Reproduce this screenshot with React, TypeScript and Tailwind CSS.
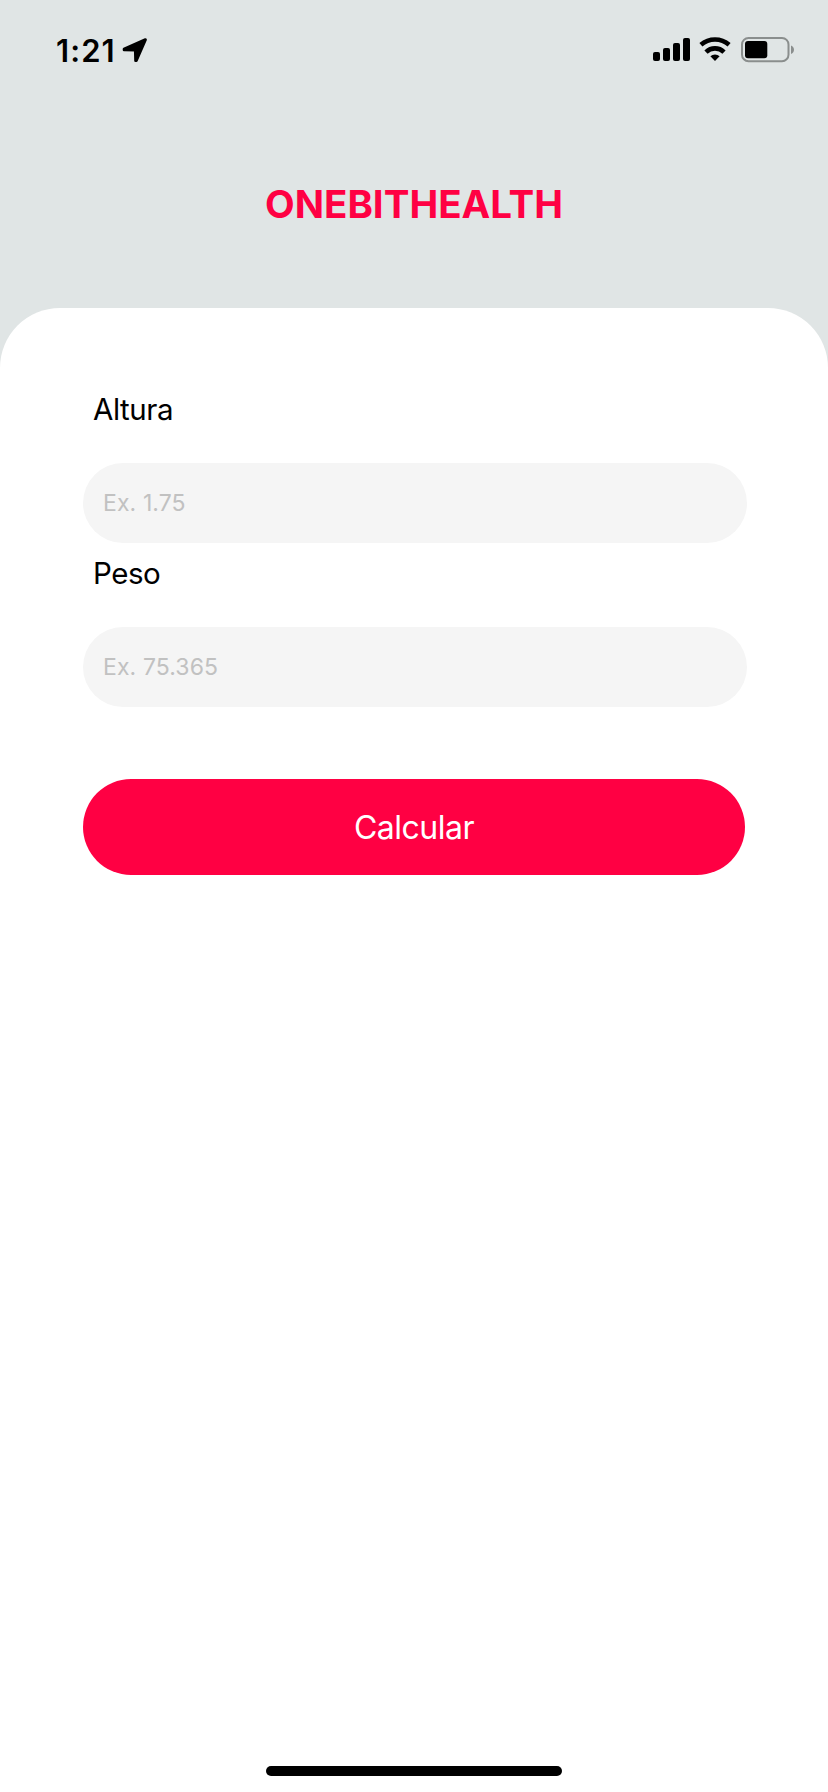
import React from "react";

function LocationArrow() {
  return (
    <svg width="26" height="26" viewBox="0 0 26 26" className="shrink-0" aria-hidden="true">
      <path
        d="M23.4 2.5 2 12 2 12.9 13.2 13.1 13.5 23.8 14.4 23.8 23.6 2.7Z"
        fill="#000"
        stroke="#000"
        strokeWidth="2.6"
        strokeLinejoin="round"
      />
    </svg>
  );
}

function SignalIcon() {
  return (
    <svg width="37" height="24" viewBox="0 0 37 24" className="shrink-0" aria-hidden="true">
      <rect x="0" y="14" width="7" height="9" rx="2" />
      <rect x="10" y="10" width="7" height="13" rx="2" />
      <rect x="20" y="5" width="7" height="18" rx="2" />
      <rect x="30" y="0" width="7" height="23" rx="2" />
    </svg>
  );
}

function WifiIcon() {
  return (
    <svg width="32" height="26" viewBox="0 0 32 26" className="shrink-0" aria-hidden="true">
      <g fill="none" stroke="#000" strokeWidth="4.6">
        <path d="M1.9 7.8A21.5 21.5 0 0 1 30.1 7.8" />
        <path d="M7 15.1A12.8 12.8 0 0 1 25 15.1" />
      </g>
      <path d="M16 24 11.4 19.3A6.6 6.6 0 0 1 20.6 19.3Z" />
    </svg>
  );
}

function BatteryIcon() {
  return (
    <svg width="54" height="26" viewBox="0 0 54 26" className="shrink-0" aria-hidden="true">
      <rect x="1" y="1" width="46.5" height="23.2" rx="6.5" fill="none" stroke="#8a8e8d" strokeWidth="2" />
      <rect x="4" y="4" width="22.3" height="17.2" rx="3" />
      <path d="M50 8.6C54 10 54 15.6 50 17Z" fill="#8a8e8d" />
    </svg>
  );
}

function StatusBar() {
  return (
    <header className="flex h-[100px] items-center justify-between pr-[33px] pl-[56px]">
      <div className="flex items-center">
        <span className="w-[66px] text-[31px] leading-none font-semibold tracking-[1.1px] whitespace-nowrap">1:21</span>
        <LocationArrow />
      </div>
      <div className="flex items-center">
        <SignalIcon />
        <div className="ml-[9px]"><WifiIcon /></div>
        <div className="ml-[10px]"><BatteryIcon /></div>
      </div>
    </header>
  );
}

function Field({ label, placeholder }: { label: string; placeholder: string }) {
  return (
    <label className="flex h-[164px] flex-col">
      <span className="pt-[11px] pl-[10px] text-[29.5px] leading-[30px] tracking-[-0.45px]">{label}</span>
      <input
        placeholder={placeholder}
        className="mt-[39px] h-20 w-[664px] rounded-[40px] bg-[#f5f5f5] px-5 text-[23px] tracking-[0.1px] outline-none placeholder:text-[#c1c1c1] placeholder:opacity-100"
      />
    </label>
  );
}

export default function App() {
  return (
    <main className="flex h-[1792px] w-[828px] flex-col bg-[#e0e5e5] font-['Inter',sans-serif] text-black">
      <StatusBar />
      <div className="flex h-[208px] items-center justify-center">
        <h1 className="text-[38.5px] leading-none font-bold whitespace-nowrap text-[#ff0043]">ONEBITHEALTH</h1>
      </div>
      <section className="flex flex-1 flex-col items-center justify-between rounded-t-[60px] bg-white px-[83px] pt-[75px] pb-4">
        <form className="flex w-full flex-col" onSubmit={(e) => e.preventDefault()}>
          <Field label="Altura" placeholder="Ex. 1.75" />
          <Field label="Peso" placeholder="Ex. 75.365" />
          <button
            type="button"
            className="mt-[68px] flex h-24 w-full items-center justify-center rounded-[48px] bg-[#ff0043] pt-0.5 text-[32px] tracking-[-0.5px] text-white"
          >
            Calcular
          </button>
        </form>
        <div className="h-[10px] w-[296px] rounded-full bg-black" />
      </section>
    </main>
  );
}
